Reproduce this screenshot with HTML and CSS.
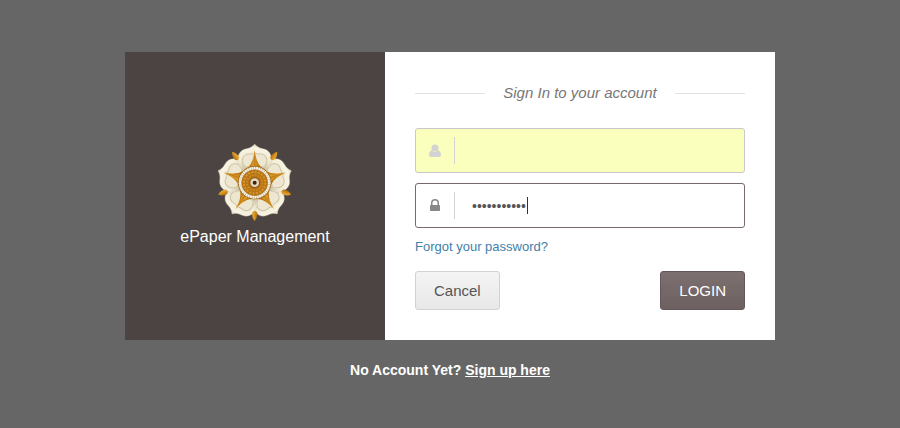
FILE: index.html
```html
<!DOCTYPE html>
<html lang="en">
<head>
<meta charset="utf-8">
<meta name="viewport" content="width=device-width, initial-scale=1">
<title>ePaper Management</title>
<link rel="stylesheet" href="styles.css">
</head>
<body>
<main class="page">
  <div class="card">
    <section class="brand">
      <svg class="logo" viewBox="24 20 228 236" aria-hidden="true">
        <defs>
          <radialGradient id="petalFill" gradientUnits="userSpaceOnUse" cx="137" cy="140" r="116">
            <stop offset="0.4" stop-color="#c9be9c"/>
            <stop offset="0.65" stop-color="#efe9d4"/>
            <stop offset="0.9" stop-color="#f8f4e4"/>
            <stop offset="1" stop-color="#e0d8bd"/>
          </radialGradient>
          <linearGradient id="gold" x1="0" x2="1">
            <stop offset="0" stop-color="#e9ad3c"/>
            <stop offset="0.5" stop-color="#d7921f"/>
            <stop offset="1" stop-color="#b06c0e"/>
          </linearGradient>
          <g id="petal">
            <path d="M137 140L97 100C79 76 84 43 112 38C125 36 132 30 137 24C142 30 149 36 162 38C190 43 195 76 177 100Z" fill="url(#petalFill)" stroke="#c3b996" stroke-width="1"/>
            <path d="M107 91C92 69 105 52 122 54Q131 55 137 50Q143 55 152 54C169 52 182 69 167 91" fill="#ede7d2" stroke="#cdc3a3" stroke-width="3"/>
          </g>
          <path id="tip" d="M137 255Q127 244 130 229Q137 221 144 229Q147 244 137 255Z"/>
          <g id="ray">
            <path d="M137 41Q140 68 149 84Q157 98 173 106L137 140L101 106Q117 98 125 84Q134 68 137 41Z" fill="url(#gold)"/>
            <path d="M137 55V95M142 74L154 99M147 86L163 103M132 74L120 99M127 86L111 103" stroke="#b3721a" stroke-width="2" fill="none"/>
          </g>
        </defs>
        <use href="#petal" transform="rotate(144 137 140)"/>
        <use href="#petal" transform="rotate(216 137 140)"/>
        <use href="#petal" transform="rotate(72 137 140)"/>
        <use href="#petal" transform="rotate(288 137 140)"/>
        <use href="#petal"/>
        <g fill="url(#gold)">
          <use href="#tip"/>
          <use href="#tip" transform="rotate(72 137 140)"/>
          <use href="#tip" transform="rotate(144 137 140)"/>
          <use href="#tip" transform="rotate(216 137 140)"/>
          <use href="#tip" transform="rotate(288 137 140)"/>
        </g>
        <use href="#ray"/>
        <use href="#ray" transform="rotate(72 137 140)"/>
        <use href="#ray" transform="rotate(144 137 140)"/>
        <use href="#ray" transform="rotate(216 137 140)"/>
        <use href="#ray" transform="rotate(288 137 140)"/>
        <circle cx="137" cy="140" r="50" fill="#95600f"/>
        <circle cx="137" cy="140" r="44" fill="#b8a17c" stroke="#f4efe2" stroke-width="8" stroke-dasharray="6 1"/>
        <circle cx="137" cy="140" r="39" fill="#b87414"/>
        <circle cx="137" cy="140" r="32" fill="none" stroke="#d2952f" stroke-width="6" stroke-dasharray="6 4"/>
        <circle cx="137" cy="140" r="23" fill="none" stroke="#cf9029" stroke-width="4" stroke-dasharray="5 4"/>
        <circle cx="137" cy="140" r="16" fill="#8c5917"/>
        <circle cx="137" cy="140" r="13" fill="#e4d9bf"/>
        <circle cx="137" cy="140" r="6" fill="#42210f"/>
      </svg>
      <div class="brand-name">ePaper Management</div>
    </section>
    <form class="form">
      <h1 class="title">Sign In to your account</h1>
      <div class="field field-filled">
        <label class="field-icon" for="user" aria-label="Username">
          <svg width="12" height="14" viewBox="0 0 12 14"><circle cx="6" cy="4" r="3.500"/><path d="M2.700 6.300Q6 9.500 9.300 6.300Q12 7.200 12 11Q12 13 10 13H2Q0 13 0 11Q0 7.200 2.700 6.300Z"/></svg>
        </label>
        <input class="input" id="user" type="text">
      </div>
      <div class="field field-active">
        <label class="field-icon" for="pass" aria-label="Password">
          <svg width="10" height="14" viewBox="0 0 10 14"><path d="M1 6V4a4 4 0 0 1 8 0v2h.3q.7 0 .7.700v4.600q0 .7-.7.700H.7Q0 12 0 11.300V6.700Q0 6 .7 6ZM2.500 6h5V4a2.500 2.500 0 0 0-5 0Z"/></svg>
        </label>
        <input class="input" id="pass" type="password" value="epapermgmt1">
        <span class="caret"></span>
      </div>
      <a class="forgot" href="#">Forgot your password?</a>
      <div class="actions">
        <button class="button" type="button">Cancel</button>
        <button class="button button-primary" type="submit">LOGIN</button>
      </div>
    </form>
  </div>
  <p class="signup">No Account Yet? <a href="#">Sign up here</a></p>
</main>
</body>
</html>
```
FILE: styles.css
```css
* {
  box-sizing: border-box;
}

body {
  margin: 0;
  background: #666;
  color: #555;
  font: 15px/20px "Liberation Sans", Arial, sans-serif;
}

.page {
  max-width: 650px;
  margin: 0 auto;
  padding-top: 52px;
}

.card {
  display: grid;
  grid-template-columns: 2fr 3fr;
  background: #fff;
}

.brand {
  display: flex;
  flex-direction: column;
  align-items: center;
  justify-content: center;
  gap: 5px;
  padding-bottom: 4px;
  background: #4b4443;
  color: #fff;
  font-size: 16px;
}

.logo {
  width: 76px;
  height: 80px;
}

.form {
  padding: 30px;
}

.title {
  display: flex;
  align-items: center;
  gap: 18px;
  margin: 0 0 24px;
  color: #777;
  font-size: 15px;
  font-style: italic;
  font-weight: 400;
  line-height: 22px;
}

.title::before,
.title::after {
  content: "";
  flex: 1;
  height: 1px;
  background: #e2e2e2;
}

.field {
  position: relative;
  display: flex;
  align-items: center;
  height: 45px;
  margin-bottom: 10px;
  border: 1px solid #c8c8c8;
  border-radius: 3px;
  background: #fff;
}

.field-filled {
  background: #faffbd;
}

.field-active {
  border-color: #766a6a;
}

.field-icon {
  display: flex;
  align-items: center;
  justify-content: center;
  width: 39px;
  height: 27px;
  border-right: 1px solid #d3d3d3;
  fill: #d3d3d3;
}

.field-active .field-icon {
  fill: #888;
}

.input {
  flex: 1;
  min-width: 0;
  height: 100%;
  padding: 0 17px;
  border: 0;
  outline: 0;
  background: transparent;
  color: #555;
  font: 14px "Liberation Sans", Arial, sans-serif;
}

.caret {
  position: absolute;
  left: 111px;
  top: 13px;
  width: 1px;
  height: 17px;
  background: #333;
}

.forgot {
  display: block;
  margin-bottom: 16px;
  color: #427fa8;
  font-size: 13px;
  line-height: 17px;
  text-decoration: none;
}

.actions {
  display: flex;
  justify-content: space-between;
}

.button {
  height: 39px;
  padding: 0 18px;
  border: 1px solid #d2d2d2;
  border-radius: 3px;
  background: linear-gradient(#f4f4f4, #e8e8e8);
  color: #555;
  font: 15px "Liberation Sans", Arial, sans-serif;
}

.button-primary {
  border-color: #655759;
  background: linear-gradient(#7d7070, #6c6060);
  color: #fff;
}

.signup {
  margin: 20px 0;
  color: #fff;
  font-size: 14px;
  font-weight: 700;
  text-align: center;
}

.signup a {
  color: inherit;
}
```
